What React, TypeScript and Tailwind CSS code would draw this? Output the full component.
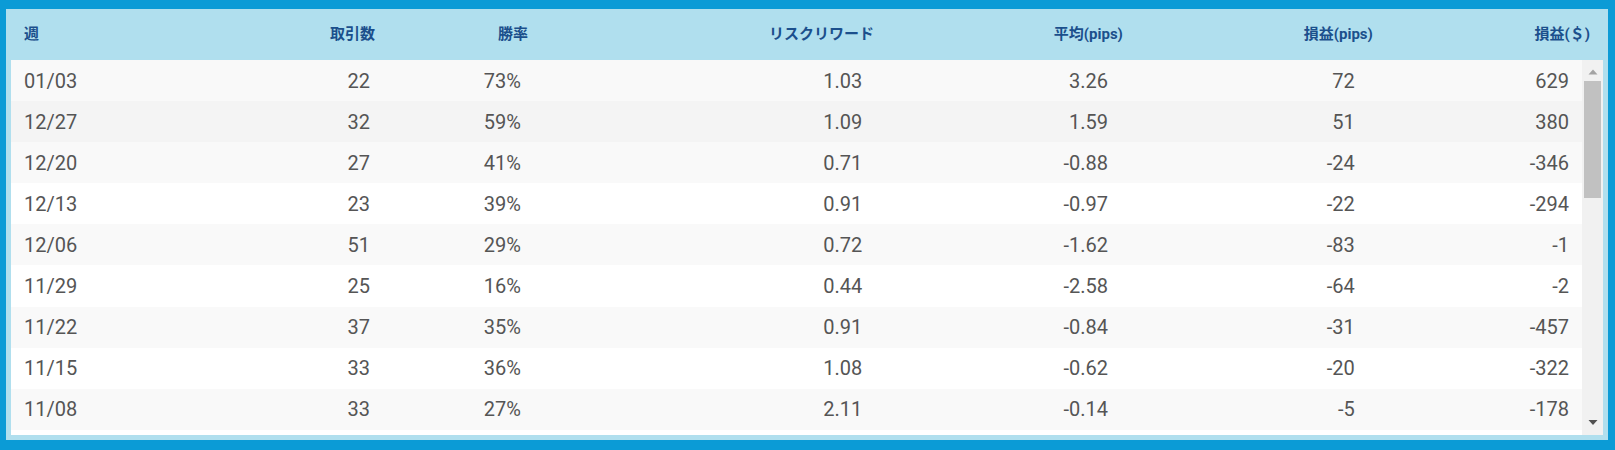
import React from 'react';

// header and body share the same percentage widths (body is narrower by the scrollbar)
const cw = ['w-[12%]', 'w-[11.68%]', 'w-[9.61%]', 'w-[21.73%]', 'w-[15.64%]', 'w-[15.70%]', 'w-[13.64%]'];

const headers = ['週', '取引数', '勝率', 'リスクリワード', '平均(pips)', '損益(pips)', '損益(＄)'];

const rows = [
  ['01/03', '22', '73%', '1.03', '3.26', '72', '629'],
  ['12/27', '32', '59%', '1.09', '1.59', '51', '380'],
  ['12/20', '27', '41%', '0.71', '-0.88', '-24', '-346'],
  ['12/13', '23', '39%', '0.91', '-0.97', '-22', '-294'],
  ['12/06', '51', '29%', '0.72', '-1.62', '-83', '-1'],
  ['11/29', '25', '16%', '0.44', '-2.58', '-64', '-2'],
  ['11/22', '37', '35%', '0.91', '-0.84', '-31', '-457'],
  ['11/15', '33', '36%', '1.08', '-0.62', '-20', '-322'],
  ['11/08', '33', '27%', '2.11', '-0.14', '-5', '-178'],
];

function rowBg(i: number) {
  if (i === 1) return 'bg-[#f4f4f4]';
  return i % 2 === 0 ? 'bg-[#f9f9f9]' : 'bg-white';
}

export default function App() {
  return (
    <div
      className="w-[1615px] h-[450px] bg-[#0b9bd6] pt-[9px] pl-[6px] pr-[7px] pb-[10px]"
      style={{ fontFamily: 'Roboto, "Noto Sans CJK JP", sans-serif' }}
    >
      <div className="flex flex-col bg-[#b0dfee] px-[5px] pb-[5px] h-full">
        <div className="flex h-[51px] shrink-0 items-center text-[15px] font-bold text-[#1b4f8c]">
          {headers.map((h, i) => (
            <div key={i} className={`${cw[i]} px-[13px] ${i === 0 ? 'text-left' : 'text-right'}`}>
              {h}
            </div>
          ))}
        </div>
        <div className="flex h-[375px] bg-[#f1f1f1]">
          <div className="flex-1 overflow-hidden bg-white">
            {rows.map((r, i) => (
              <div key={i} className={`flex h-[41.1px] items-center text-[20px] text-[#555] ${rowBg(i)}`}>
                {r.map((c, j) => (
                  <div key={j} className={`${cw[j]} px-[13px] ${j === 0 ? 'text-left' : 'text-right'}`}>
                    {c}
                  </div>
                ))}
              </div>
            ))}
          </div>
          <div className="flex w-[21px] flex-col items-center bg-[#f1f1f1]">
            <svg width="10" height="17" viewBox="0 0 10 17" className="mt-[5px]">
              <path d="M0.5 9.5 L5 4.5 L9.5 9.5 Z" fill="#a3a3a3" />
            </svg>
            <div className="mt-[-1px] h-[117px] w-[17px] bg-[#c1c1c1]" />
            <div className="flex-1" />
            <svg width="10" height="17" viewBox="0 0 10 17" className="mb-[4px]">
              <path d="M0.5 6 L9.5 6 L5 11 Z" fill="#505050" />
            </svg>
          </div>
        </div>
      </div>
    </div>
  );
}
